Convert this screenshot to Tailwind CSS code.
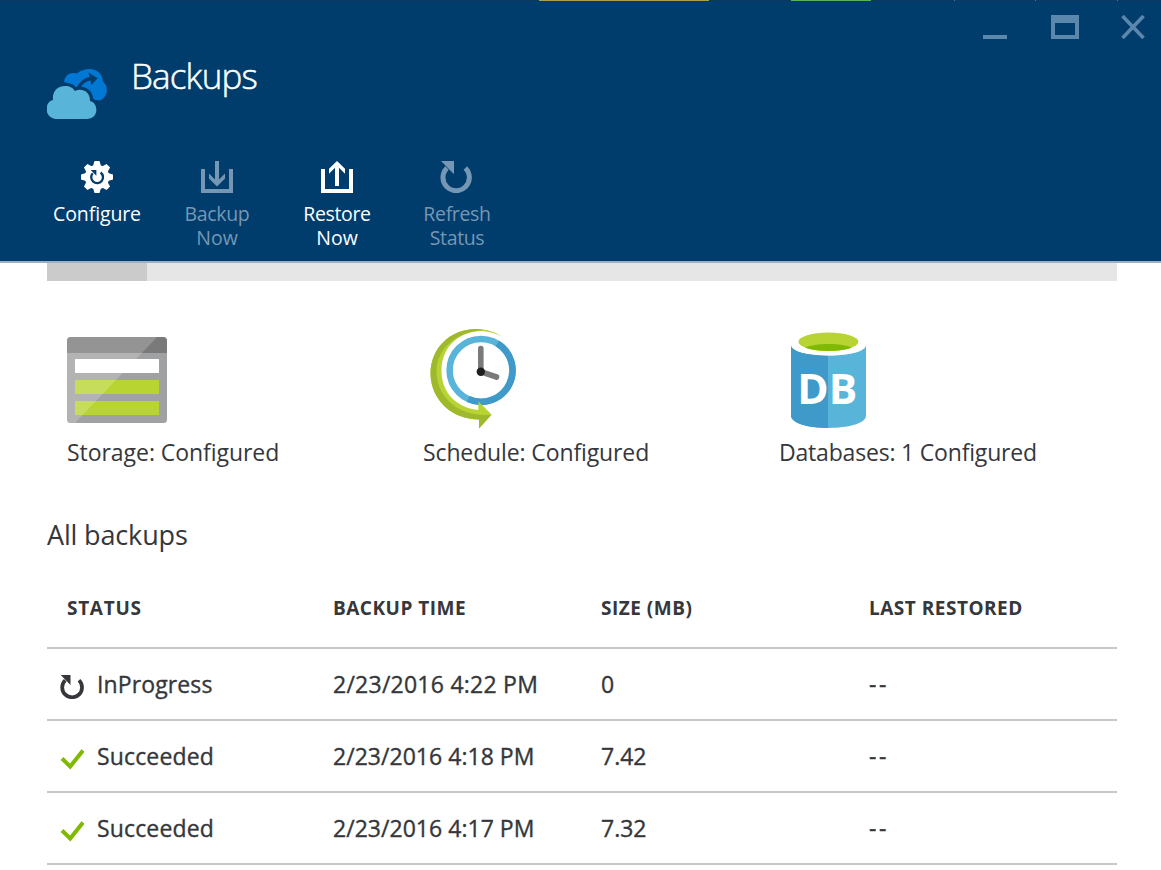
<!DOCTYPE html>
<html lang="en">
<head>
<meta charset="utf-8">
<title>Backups</title>
<script src="https://cdn.jsdelivr.net/npm/@tailwindcss/browser@4"></script>
</head>
<body class="h-[870px] overflow-hidden bg-white font-['Open_Sans','Noto_Sans',sans-serif] text-[#35373b]">

<header class="relative h-[263px] border-b-2 border-[#9fb0c4] bg-[#003c6c] text-white">
  <!-- Edges of the tiles behind the blade -->
  <div class="flex h-px bg-[#0b3760]">
    <div class="ml-[539px] h-px w-[170px] bg-[#a8a050]"></div>
    <div class="ml-[82px] h-px w-[80px] bg-[#5cb25a]"></div>
    <div class="ml-[83px] h-px w-px bg-[#4f7898]"></div>
    <div class="ml-[80px] h-px w-px bg-[#4f7898]"></div>
    <div class="ml-[81px] h-px w-px bg-[#4f7898]"></div>
  </div>

  <!-- Window controls -->
  <div class="absolute top-[15px] right-4 flex items-start text-[#5c87ac]">
    <svg class="mr-[44px] h-6 w-6" viewBox="0 0 24 24"><path d="M0 20H24V24H0Z" fill="currentColor"/></svg>
    <svg class="mr-[42px] h-6 w-7" viewBox="0 0 28 24"><path d="M0 0H28V24H0ZM4 8V20H24V8Z" fill="currentColor" fill-rule="evenodd"/></svg>
    <svg class="h-6 w-6" viewBox="0 0 24 24"><path d="M1.500 1L22.500 23M22.500 1L1.500 23" stroke="currentColor" stroke-width="3.600"/></svg>
  </div>

  <div class="flex pt-[54px] pl-[47px]">
    <svg class="mt-[14px] h-[50px] w-[60px]" viewBox="0 0 60 50">
      <path d="M17 13C18 6 23 3 30 4.500C33 1.500 38 0 43 0C50 0 55.500 5 56 12.500C62 17 61 28 53 31.500L40 30L26 16Z" fill="#0078d4"/>
      <path d="M31 20C33 14.500 37 10.500 44 9.500" fill="none" stroke="#003c6c" stroke-width="3.600"/>
      <path d="M41.500 3.500L50.500 9.300L44.500 16Z" fill="#003c6c"/>
      <path d="M10.500 50C-3 50 -3.500 33 6 31C5 22 11 17 18 17C23 17 26 19 28 22C35 18.500 43.500 23 43 32C52 34 52 50 39.500 50Z" fill="#59b4d9" stroke="#003c6c" stroke-width="6.500" paint-order="stroke"/>
    </svg>
    <h1 class="mt-px ml-6 text-[35px] leading-10 font-light tracking-[-0.85px] [-webkit-text-stroke:0.5px_currentColor]">Backups</h1>
  </div>

  <nav class="mt-[42px] ml-[37px] flex text-center text-[19.5px] leading-6 tracking-[-0.35px]">
    <div class="flex w-[120px] flex-col items-center gap-[9px]">
      <svg class="h-8 w-8" viewBox="-16 -16 32 32">
        <g fill="#fff">
          <circle r="12.200"/>
          <path id="tooth" d="M-4 -11L-2.500 -16H2.500L4 -11V11L2.500 16H-2.500L-4 11Z"/>
          <use href="#tooth" transform="rotate(45)"/><use href="#tooth" transform="rotate(90)"/><use href="#tooth" transform="rotate(135)"/>
        </g>
        <path d="M3.600 -4.500A5.900 5.900 0 1 1 -4.200 -3.800" fill="none" stroke="#003c6c" stroke-width="2.300"/>
        <path d="M-6.300 -7H-0.600V-1.300Z" fill="#003c6c"/>
      </svg>
      <span class="tracking-[-0.12px]">Configure</span>
    </div>
    <div class="flex w-[120px] flex-col items-center gap-[9px] text-[#7697b4]">
      <svg class="h-8 w-8" viewBox="0 0 32 32"><path d="M2 8V30H30V8" fill="none" stroke="currentColor" stroke-width="4"/><path d="M14 0H18V18.500L24 12.500V17.500L16 25.500L8 17.500V12.500L14 18.500Z" fill="currentColor"/></svg>
      <span>Backup<br><span class="tracking-[0px]">Now</span></span>
    </div>
    <div class="flex w-[120px] flex-col items-center gap-[9px]">
      <svg class="h-8 w-8" viewBox="0 0 32 32"><path d="M2 8V30H30V8" fill="none" stroke="currentColor" stroke-width="4"/><path d="M14 25H18V6.800L24 12.800V7.800L16 0L8 7.800V12.800L14 6.800Z" fill="currentColor"/></svg>
      <span>Restore<br><span class="tracking-[0px]">Now</span></span>
    </div>
    <div class="flex w-[120px] flex-col items-center gap-[9px] text-[#7697b4]">
      <svg class="mr-0.5 h-8 w-8" viewBox="0 0 32 32"><path d="M25.300 7A13.200 13.200 0 1 1 7 7" fill="none" stroke="currentColor" stroke-width="5"/><path d="M1 0H14V13.200Z" fill="currentColor"/></svg>
      <span>Refresh<br>Status</span>
    </div>
  </nav>
</header>

<main class="ml-[47px] w-[1070px]">
  <div class="h-[18px] bg-[#e6e6e6]"><div class="h-full w-[100px] bg-[#cbcbcb]"></div></div>

  <section class="mt-[45px] grid grid-cols-[356px_356px_1fr] pl-5 text-[23px] leading-8">
    <div>
      <svg class="h-[110px] w-[110px]" viewBox="0 0 110 110">
        <path d="M0 27H100V93.500A3.500 3.500 0 0 1 96.500 97H3.500A3.500 3.500 0 0 1 0 93.500Z" fill="#a0a1a2"/>
        <path d="M0 27V14.500A3.500 3.500 0 0 1 3.500 11H96.500A3.500 3.500 0 0 1 100 14.500V27Z" fill="#7a7a7a"/>
        <path d="M8 33H92V47H8Z" fill="#fff"/>
        <path d="M8 54H92V68H8ZM8 75H92V89H8Z" fill="#b8d432"/>
        <path d="M0 14.500A3.500 3.500 0 0 1 3.500 11H90L8 97H3.500A3.500 3.500 0 0 1 0 93.500Z" fill="#fff" opacity=".2"/>
      </svg>
      <div class="tracking-[-0.05px]">Storage: Configured</div>
    </div>
    <div>
      <svg class="h-[110px] w-[110px]" viewBox="423 326 110 110">
        <path d="M502 336.500C493 330.500 484 329 474 329C450 330 430.500 348 430.500 374C431 400 452 419.500 479 419.500V428.500L491.500 414.700L478.500 401.500V410C458 408 441.500 394 441.500 371C441.500 346 460 331 482 331C489 331.500 496 333.500 502 336.500Z" fill="#b8d432"/>
        <path d="M484 330C480 329 477 329 474 329C450 330 430.500 348 430.500 374C431 400 452 419.500 479 419.500V428.500L491.500 414.700L479 414.500C456 413 436.500 396 436.500 371C437 350 454 332 484 330Z" fill="#9fb92c"/>
        <circle cx="481" cy="370.300" r="31.400" fill="#fff" stroke="#59b4d9" stroke-width="6.500"/>
        <path d="M497.200 343.400A31.400 31.400 0 0 1 468.200 399" fill="none" stroke="#3f99c9" stroke-width="6.500"/>
        <path d="M478.500 401.500L491.500 414.700H478.500Z" fill="#b8d432"/>
        <path d="M480.800 348.500V371.700L496.500 377" fill="none" stroke="#7a7a7a" stroke-width="5.600" stroke-linecap="round"/>
        <circle cx="480.800" cy="371.700" r="4.200" fill="#1e1e1e"/>
      </svg>
      <div class="tracking-[-0.12px]">Schedule: Configured</div>
    </div>
    <div>
      <svg class="h-[110px] w-[110px]" viewBox="779 326 110 110">
        <path d="M791 345C791 359 866 359 866 345V415.500C866 432 791 432 791 415.500Z" fill="#59b4d9"/>
        <path d="M791 345C791 352 809 355.500 828 355.500V428C809 428 791 423.500 791 415.500Z" fill="#3f99c9"/>
        <ellipse cx="828.400" cy="344" rx="37.500" ry="11.500" fill="#fff"/>
        <ellipse cx="828.400" cy="341.700" rx="30" ry="9.200" fill="#b8d432"/>
        <path d="M805 347.500C815 342.800 842 342.800 852 347.500C842 352 815 352 805 347.500Z" fill="#7fba00"/>
        <text x="797.300" y="403.700" font-family="Open Sans" font-weight="700" font-size="41.500" textLength="60" lengthAdjust="spacingAndGlyphs" fill="#fff">DB</text>
      </svg>
      <div class="tracking-[-0.19px]">Databases: 1 Configured</div>
    </div>
  </section>

  <h2 class="mt-[49px] text-[27px] leading-9 tracking-[-0.15px]">All backups</h2>

  <section class="mt-[15px]">
    <div class="grid h-[81px] grid-cols-[266px_268px_268px_1fr] items-center border-b-2 border-[#c8c8c8] pl-5 text-[19px] leading-6 font-bold tracking-[0.5px]">
      <div class="tracking-[0.7px]">STATUS</div><div>BACKUP TIME</div><div>SIZE (MB)</div><div>LAST RESTORED</div>
    </div>
    <div class="grid h-[72px] grid-cols-[50px_236px_268px_268px_1fr] items-center border-b-2 border-[#c8c8c8] text-[23px] leading-8 font-medium tracking-[0.25px] [-webkit-text-stroke:0.35px_currentColor]">
      <svg class="mt-[6px] ml-[13px] h-6 w-6" viewBox="0 0 32 32"><path d="M25.300 7A13.200 13.200 0 1 1 7 7" fill="none" stroke="currentColor" stroke-width="5"/><path d="M1 0H14V13.200Z" fill="currentColor"/></svg>
      <div class="tracking-[0.12px]">InProgress</div><div>2/23/2016 4:22 PM</div><div>0</div><div class="tracking-[2.6px]">--</div>
    </div>
    <div class="grid h-[72px] grid-cols-[50px_236px_268px_268px_1fr] items-center border-b-2 border-[#c8c8c8] text-[23px] leading-8 font-medium tracking-[0.15px] [-webkit-text-stroke:0.35px_currentColor]">
      <svg class="mt-[5px] ml-[13px] h-6 w-6" viewBox="0 0 24 24"><path d="M2 11.500L10.200 19.500L23 3.500" fill="none" stroke="#7fba00" stroke-width="4"/></svg>
      <div>Succeeded</div><div class="tracking-[0.03px]">2/23/2016 4:18 PM</div><div class="tracking-[0px]">7.42</div><div class="tracking-[2.6px]">--</div>
    </div>
    <div class="grid h-[72px] grid-cols-[50px_236px_268px_268px_1fr] items-center border-b-2 border-[#c8c8c8] text-[23px] leading-8 font-medium tracking-[0.15px] [-webkit-text-stroke:0.35px_currentColor]">
      <svg class="mt-[5px] ml-[13px] h-6 w-6" viewBox="0 0 24 24"><path d="M2 11.500L10.200 19.500L23 3.500" fill="none" stroke="#7fba00" stroke-width="4"/></svg>
      <div>Succeeded</div><div class="tracking-[0.03px]">2/23/2016 4:17 PM</div><div class="tracking-[0px]">7.32</div><div class="tracking-[2.6px]">--</div>
    </div>
  </section>
</main>
</body>
</html>
